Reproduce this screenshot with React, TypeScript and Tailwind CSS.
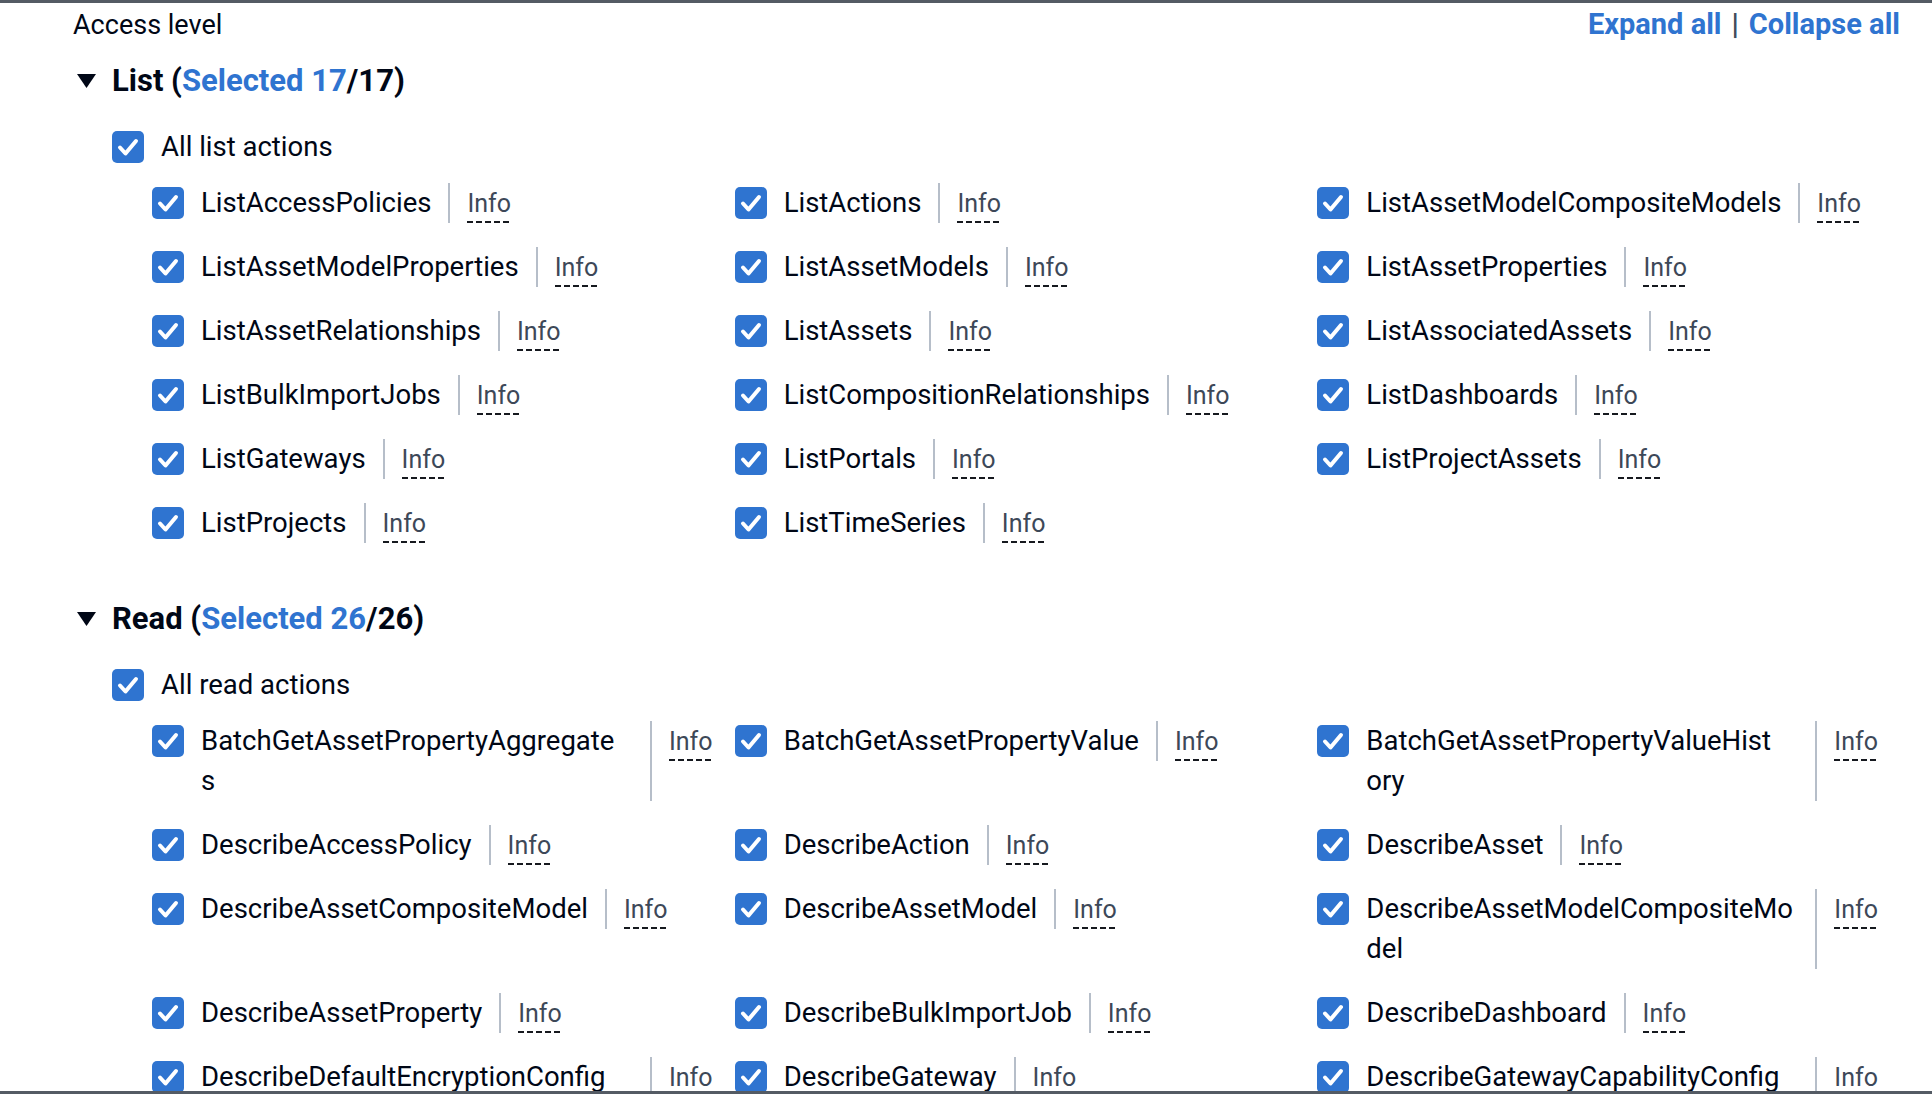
import clsx from 'clsx';

// One IAM action row: checkbox, name, divider, Info link
type Action = {
  name: string;
  lines?: string[]; // forced wrap, as the console breaks long names
  full?: boolean; // name column takes the max width
};

const listActions: Action[] = [
  { name: 'ListAccessPolicies' },
  { name: 'ListActions' },
  { name: 'ListAssetModelCompositeModels' },
  { name: 'ListAssetModelProperties' },
  { name: 'ListAssetModels' },
  { name: 'ListAssetProperties' },
  { name: 'ListAssetRelationships' },
  { name: 'ListAssets' },
  { name: 'ListAssociatedAssets' },
  { name: 'ListBulkImportJobs' },
  { name: 'ListCompositionRelationships' },
  { name: 'ListDashboards' },
  { name: 'ListGateways' },
  { name: 'ListPortals' },
  { name: 'ListProjectAssets' },
  { name: 'ListProjects' },
  { name: 'ListTimeSeries' },
];

// only the part of the read list that is on screen
const readActions: Action[] = [
  { name: 'BatchGetAssetPropertyAggregates', lines: ['BatchGetAssetPropertyAggregate', 's'], full: true },
  { name: 'BatchGetAssetPropertyValue' },
  { name: 'BatchGetAssetPropertyValueHistory', lines: ['BatchGetAssetPropertyValueHist', 'ory'], full: true },
  { name: 'DescribeAccessPolicy' },
  { name: 'DescribeAction' },
  { name: 'DescribeAsset' },
  { name: 'DescribeAssetCompositeModel' },
  { name: 'DescribeAssetModel' },
  { name: 'DescribeAssetModelCompositeModel', lines: ['DescribeAssetModelCompositeMo', 'del'], full: true },
  { name: 'DescribeAssetProperty' },
  { name: 'DescribeBulkImportJob' },
  { name: 'DescribeDashboard' },
  { name: 'DescribeDefaultEncryptionConfig', full: true },
  { name: 'DescribeGateway' },
  { name: 'DescribeGatewayCapabilityConfig', full: true },
];

function CheckBox() {
  return (
    <span className="flex h-[32px] w-[32px] shrink-0 items-center justify-center rounded-[5px] bg-[#2f74d0]">
      <svg width="32" height="32" viewBox="0 0 32 32" fill="none">
        <path
          d="M8 16.5L13.5 22.5L24 10"
          stroke="white"
          strokeWidth="4"
          strokeLinecap="round"
          strokeLinejoin="round"
        />
      </svg>
    </span>
  );
}

function Info() {
  return (
    <span className="ml-[17px] inline-block self-start bg-[repeating-linear-gradient(90deg,#16191f_0px,#16191f_6px,transparent_6px,transparent_9px)] bg-[length:100%_2px] bg-bottom bg-no-repeat pt-[1px] text-[25px] leading-[39px] text-[#3d4858]">
      Info
    </span>
  );
}

function ActionItem({ a }: { a: Action }) {
  const lines = a.lines ?? [a.name];
  return (
    <div className="flex items-stretch">
      <div className="self-start pt-[4px]">
        <CheckBox />
      </div>
      <div
        className={clsx(
          'ml-[17px] whitespace-nowrap text-[27.5px] leading-[40px] text-[#000716]',
          a.full && 'w-[432px]'
        )}
      >
        {lines.map((l) => (
          <div key={l}>{l}</div>
        ))}
      </div>
      <div className="ml-[17px] w-[2px] shrink-0 bg-[#b6bec9]" />
      <Info />
    </div>
  );
}

function Group({
  title,
  count,
  allLabel,
  actions,
}: {
  title: string;
  count: number;
  allLabel: string;
  actions: Action[];
}) {
  return (
    <section>
      <div className="flex h-[40px] items-center">
        <svg className="ml-[4px] mr-[16px]" width="19" height="14" viewBox="0 0 19 14">
          <path d="M0 0H19L9.5 14Z" fill="#000716" />
        </svg>
        <h2 className="text-[31px] font-bold leading-[40px]">
          {title} (<span className="text-[#2f74d0]">Selected {count}</span>/{count})
        </h2>
      </div>

      <div className="ml-[39px] mt-[26px] flex h-[40px] items-center">
        <CheckBox />
        <span className="ml-[17px] text-[27.5px] leading-[40px]">{allLabel}</span>
      </div>

      <div className="ml-[79px] mt-[16px] grid grid-cols-3 items-start gap-y-[24px]">
        {actions.map((a) => (
          <ActionItem key={a.name} a={a} />
        ))}
      </div>
    </section>
  );
}

export default function App() {
  return (
    <div className="h-[1094px] overflow-hidden border-y-[3px] border-[#545b64] bg-white pl-[73px] pr-[32px] font-['Roboto',sans-serif] text-[#000716]">
      <div className="flex h-[44px] items-center justify-between">
        <span className="text-[27px]">Access level</span>
        <div className="text-[29px] font-bold text-[#2f74d0]">
          Expand all<span className="mx-[10px] text-[#414d5c]">|</span>Collapse all
        </div>
      </div>

      <div className="mt-[14px] flex flex-col gap-[56px]">
        <Group title="List" count={17} allLabel="All list actions" actions={listActions} />
        <Group title="Read" count={26} allLabel="All read actions" actions={readActions} />
      </div>
    </div>
  );
}
